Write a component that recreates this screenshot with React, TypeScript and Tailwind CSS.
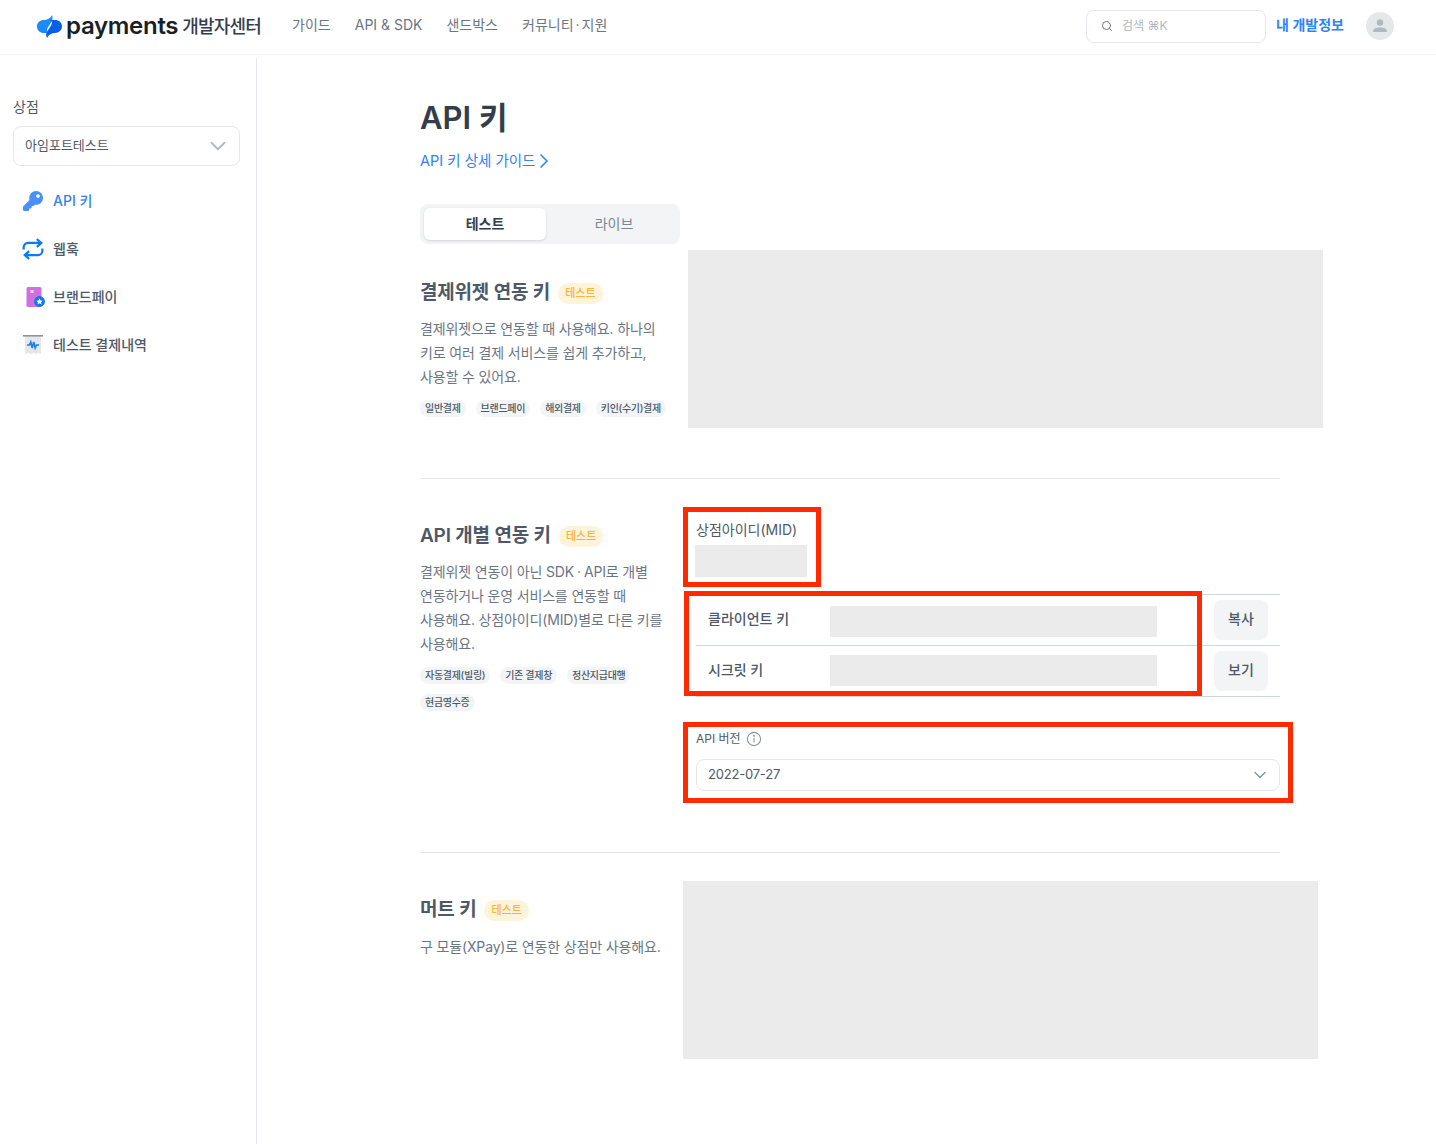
import { ChevronDown, ChevronRight, Search } from 'lucide-react';
import { FaKey } from 'react-icons/fa';

const font = "font-['Inter','Noto_Sans_CJK_KR',sans-serif]";

function Logo() {
  return (
    <svg width="25" height="23" viewBox="0 0 25 23" className="shrink-0">
      <path d="M15 0 C16 3 15.5 5 14 7.5 L10.5 13 C9.5 15 10 17.5 12.5 18 L7 18 C3 18 0 15.5 0 11.5 C0 7.5 3 5 7 5 C10 5 13.5 3.5 15 0 Z" fill="#1a8cff" />
      <path d="M10 23 C8.5 20.5 9 18 10.5 16 L14 10.5 C15.5 8 15 5.5 12.5 5 L18 5 C22 5 25 7.5 25 11.5 C25 15 22 18 18 18 C15 18 11.5 19.5 10 23 Z" fill="#0a5fe8" />
    </svg>
  );
}

function WebhookIcon() {
  return (
    <svg width="22" height="22" viewBox="0 0 20 20" fill="none" stroke="#0a7cf0" strokeWidth="2" className="shrink-0">
      <path d="M1.5 10.5 V8.5 A4 4 0 0 1 5.5 4.5 H17" />
      <path d="M13.5 1 L17.5 4.5 L13.5 8" />
      <path d="M18.5 9.5 V11.5 A4 4 0 0 1 14.5 15.5 H3" />
      <path d="M6.5 12 L2.5 15.5 L6.5 19" />
    </svg>
  );
}

function BrandPayIcon() {
  return (
    <svg width="20" height="20" viewBox="-1.5 0 20 20" className="shrink-0 overflow-visible">
      <rect x="2" y="0" width="15" height="20" rx="1.5" fill="#d36ee0" />
      <rect x="6" y="3" width="3" height="3" fill="#f6dcf9" />
      <circle cx="15" cy="14.5" r="5.4" fill="#0a78f0" />
      <path d="M15 11.3 L16 13.4 L18.2 13.7 L16.6 15.2 L17 17.4 L15 16.3 L13 17.4 L13.4 15.2 L11.8 13.7 L14 13.4 Z" fill="#ffffff" />
    </svg>
  );
}

function ReceiptIcon() {
  return (
    <svg width="20" height="20" viewBox="0 0 20 20" className="shrink-0">
      <path d="M2 1 H18 V19 L15.5 18 L13 19 L10.5 18 L8 19 L5.5 18 L2 19 Z" fill="#e5e8eb" />
      <rect x="0" y="0" width="20" height="1.6" fill="#8b95a1" />
      <path d="M4 10 H6.5 L7.8 7 L9.2 13 L10.7 7 L12.2 13 L13.5 10 H16" fill="none" stroke="#1b7cf0" strokeWidth="1.6" />
    </svg>
  );
}

function NavItem({ icon, label, active }: { icon: React.ReactNode; label: string; active?: boolean }) {
  return (
    <div className="flex h-12 items-center gap-2.5 pl-2.5">
      <div className="flex h-5 w-5 items-center justify-center">{icon}</div>
      <span className={`text-sm font-medium ${active ? 'text-[#3182f6]' : 'text-[#4e5968]'}`}>{label}</span>
    </div>
  );
}

function Chips({ items }: { items: string[] }) {
  return (
    <div className="flex flex-wrap gap-x-[10px] gap-y-[10px]">
      {items.map((item) => (
        <span key={item} className="flex h-[17px] items-center rounded-full bg-[#f2f4f6] px-[5px] text-[10px] font-medium tracking-[-0.3px] text-[#4e5968]">
          {item}
        </span>
      ))}
    </div>
  );
}

function SectionTitle({ title }: { title: string }) {
  return (
    <div className="flex h-7 items-center gap-2">
      <h2 className="text-[19px] font-semibold tracking-[-0.2px] text-[#4e5968]">{title}</h2>
      <span className="flex h-[21px] items-center rounded-full bg-[#fff3d9] px-[7px] text-[11px] font-medium text-[#ffb331]">테스트</span>
    </div>
  );
}

function Desc({ children }: { children: React.ReactNode }) {
  return <p className="text-sm leading-6 tracking-[-0.15px] text-[#6b7684]">{children}</p>;
}

function KeyRow({ label, action, grayClass }: { label: string; action: string; grayClass: string }) {
  return (
    <div className="flex h-[51px] items-center border-b border-[#d1d6db]">
      <span className="mb-[2px] w-[134px] pl-3 text-sm font-medium text-[#4e5968]">{label}</span>
      <div className={`h-[31px] w-[327px] bg-[#ebebeb] ${grayClass}`} />
      <button className="ml-[57px] flex h-10 w-[54px] items-center justify-center rounded-lg bg-[#f2f4f6] pb-[2px] text-sm font-medium text-[#4e5968]">
        {action}
      </button>
    </div>
  );
}

export default function App() {
  return (
    <div className={`${font} min-h-[1144px] bg-white`}>
      {/* Header */}
      <header className="flex h-[55px] items-center border-b border-[#f2f4f6] pb-[2px] pl-[37px] pr-[42px]">
        <Logo />
        <div className="ml-[4px] flex items-center">
          <span className="text-[24px] font-semibold leading-none tracking-[-0.3px] text-[#191f28]">payments</span>
          <span className="ml-[4px] text-[18px] font-medium tracking-[-0.8px] text-[#333d4b]">개발자센터</span>
        </div>
        <nav className="mb-[2px] ml-[31px] flex items-center gap-6 text-sm text-[#6b7684]">
          <span>가이드</span>
          <span>API & SDK</span>
          <span>샌드박스</span>
          <span>
            커뮤니티<span className="mx-[2px]">·</span>지원
          </span>
        </nav>
        <div className="ml-auto flex h-[33px] w-[180px] items-center rounded-lg border border-[#e5e8eb] pl-[14px]">
          <Search size={12} strokeWidth={2} className="text-[#6b7684]" />
          <span className="ml-[9px] text-xs text-[#b0b8c1]">검색 ⌘K</span>
        </div>
        <span className="mb-[2px] ml-[10px] text-sm font-semibold text-[#3182f6]">내 개발정보</span>
        <div className="ml-[22px] flex h-7 w-7 items-center justify-center rounded-full bg-[#e5e8eb]">
          <svg width="16" height="16" viewBox="0 0 16 16" fill="#b0b8c1">
            <circle cx="8" cy="4.5" r="3.2" />
            <path d="M1 14 C1 10.5 4 9.5 8 9.5 C12 9.5 15 10.5 15 14 Z" />
          </svg>
        </div>
      </header>

      <div className="flex pt-[3px]">
        {/* Sidebar */}
        <aside className="h-[1086px] w-[257px] shrink-0 border-r border-[#e5e8eb] pl-[13px] pr-4 pt-[39px]">
          <div className="text-sm leading-5 text-[#4e5968]">상점</div>
          <div className="mt-[9px] flex h-10 items-center justify-between rounded-lg border border-[#e5e8eb] pl-[11px] pr-[8px] text-[13px] text-[#4e5968]">
            <span>아임포트테스트</span>
            <ChevronDown size={26} strokeWidth={1.7} className="text-[#b0b8c1]" />
          </div>
          <div className="mt-[11px]">
            <NavItem icon={<FaKey size={20} className="text-[#4a90f7]" />} label="API 키" active />
            <NavItem icon={<WebhookIcon />} label="웹훅" />
            <NavItem icon={<BrandPayIcon />} label="브랜드페이" />
            <NavItem icon={<ReceiptIcon />} label="테스트 결제내역" />
          </div>
        </aside>

        {/* Main */}
        <main className="ml-[163px] w-[860px] shrink-0 pt-[40px]">
          <h1 className="text-[31px] font-semibold leading-10 text-[#333d4b]">API 키</h1>
          <div className="mt-[11px] flex h-6 items-center text-[14.5px] text-[#3182f6]">
            <span>API 키 상세 가이드</span>
            <ChevronRight size={24} strokeWidth={1.6} className="-ml-[3px]" />
          </div>

          <div className="mt-[31px] flex h-10 w-[260px] items-center rounded-lg bg-[#f2f4f6] p-1 text-sm">
            <div className="flex h-8 w-[122px] items-center justify-center rounded-md bg-white font-semibold text-[#333d4b] shadow-sm">테스트</div>
            <div className="flex flex-1 items-center justify-center pl-[6px] text-[#7b8794]">라이브</div>
          </div>

          {/* 결제위젯 연동 키 */}
          <section className="mt-[6px] flex border-b border-[#e5e8eb] pb-[50px]">
            <div className="w-[268px] shrink-0 pt-[29px]">
              <SectionTitle title="결제위젯 연동 키" />
              <div className="mt-[10px]">
                <Desc>
                  결제위젯으로 연동할 때 사용해요. 하나의<br />
                  키로 여러 결제 서비스를 쉽게 추가하고,<br />
                  사용할 수 있어요.
                </Desc>
              </div>
              <div className="mt-[11px]">
                <Chips items={['일반결제', '브랜드페이', '해외결제', '키인(수기)결제']} />
              </div>
            </div>
            <div className="h-[178px] w-[635px] shrink-0 bg-[#ebebeb]" />
          </section>

          {/* API 개별 연동 키 */}
          <section className="flex border-b border-[#e5e8eb] pb-[61px] pt-[41px]">
            <div className="w-[276px] shrink-0 pr-2 pt-[2px]">
              <SectionTitle title="API 개별 연동 키" />
              <div className="mt-[10px]">
                <Desc>
                  결제위젯 연동이 아닌 SDK<span className="mx-[3px]">·</span>API로 개별<br />
                  연동하거나 운영 서비스를 연동할 때<br />
                  사용해요. 상점아이디(MID)별로 다른 키를<br />
                  사용해요.
                </Desc>
              </div>
              <div className="mt-[11px]">
                <Chips items={['자동결제(빌링)', '기존 결제창', '정산지급대행', '현금영수증']} />
              </div>
            </div>
            <div className="relative flex-1">
              <div className="text-sm leading-5 text-[#4e5968]">상점아이디(MID)</div>
              <div className="ml-[-1px] mt-[5px] h-8 w-[112px] bg-[#ebebeb]" />
              <div className="mt-[17px] border-t border-[#d1d6db]">
                <KeyRow label="클라이언트 키" action="복사" grayClass="mt-[3px]" />
                <KeyRow label="시크릿 키" action="보기" grayClass="-mt-[1px]" />
              </div>
              <div className="mt-8 flex h-5 items-center gap-[5px] text-xs text-[#4e5968]">
                <span>API 버전</span>
                <svg width="16" height="16" viewBox="0 0 16 16" fill="none" stroke="#8b95a1" strokeWidth="1.1">
                  <circle cx="8" cy="8" r="6.6" />
                  <path d="M8 7 V11.5" />
                  <circle cx="8" cy="4.8" r="0.4" />
                </svg>
              </div>
              <div className="mt-[10px] flex h-8 items-center justify-between rounded-lg border border-[#e5e8eb] pl-[11px] pr-[9px] text-[13px] tracking-[-0.2px] text-[#4e5968]">
                <span>2022-07-27</span>
                <ChevronDown size={20} strokeWidth={1.7} className="text-[#8b95a1]" />
              </div>

              {/* 빨간 표시 박스 */}
              <div className="absolute left-[-13px] top-[-13px] h-[80px] w-[138px] border-[5px] border-[#ff2a00]" />
              <div className="absolute left-[-12px] top-[71px] h-[105px] w-[518px] border-[5px] border-[#ff2a00]" />
              <div className="absolute left-[-13px] top-[202px] h-[81px] w-[610px] border-[5px] border-[#ff2a00]" />
            </div>
          </section>

          {/* 머트 키 */}
          <section className="flex pt-[28px]">
            <div className="w-[263px] shrink-0 pt-[15px]">
              <SectionTitle title="머트 키" />
              <div className="mt-[11px]">
                <Desc>구 모듈(XPay)로 연동한 상점만 사용해요.</Desc>
              </div>
            </div>
            <div className="h-[178px] w-[635px] shrink-0 bg-[#ebebeb]" />
          </section>
        </main>
      </div>
    </div>
  );
}
